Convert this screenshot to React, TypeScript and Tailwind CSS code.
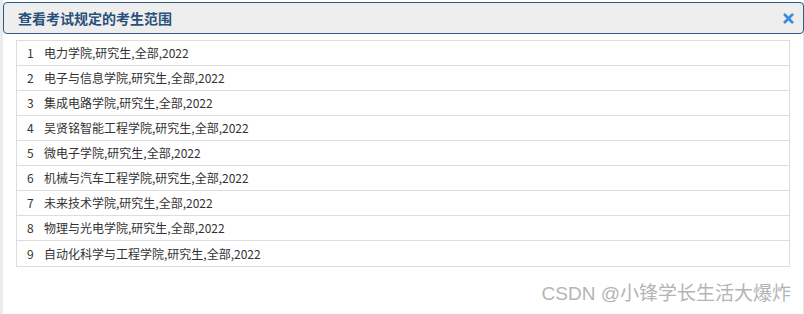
const rows = [
  "电力学院,研究生,全部,2022",
  "电子与信息学院,研究生,全部,2022",
  "集成电路学院,研究生,全部,2022",
  "吴贤铭智能工程学院,研究生,全部,2022",
  "微电子学院,研究生,全部,2022",
  "机械与汽车工程学院,研究生,全部,2022",
  "未来技术学院,研究生,全部,2022",
  "物理与光电学院,研究生,全部,2022",
  "自动化科学与工程学院,研究生,全部,2022",
];

const font = { fontFamily: '"Noto Sans CJK SC", "Open Sans", sans-serif' };

export default function App() {
  return (
    <div className="relative flex h-[314px] w-[804px] bg-white" style={font}>
      {/* left gutter */}
      <div className="w-[3px] bg-[#ebebeb]" />

      <div className="flex flex-1 flex-col border-r border-[#e4e4e4]">
        {/* dialog header */}
        <div className="mt-[2px] -mr-px flex h-[32px] items-center justify-between rounded-[4px] border border-[#2c5b88] bg-[#eeeeee] pl-[14px] pr-[9px]">
          <span className="text-[14px] font-bold leading-none text-[#28507a]">
            查看考试规定的考生范围
          </span>
          <svg width="11" height="11" viewBox="0 0 12 12">
            <path
              d="M2 2 L10 10 M10 2 L2 10"
              stroke="#3b8ae0"
              strokeWidth="3"
              strokeLinecap="round"
            />
          </svg>
        </div>

        {/* list */}
        <div className="ml-[13px] mr-[13px] mt-[6px] border border-[#dddddd]">
          {rows.map((r, i) => (
            <div
              key={i}
              className="flex h-[25px] items-center border-b border-[#dddddd] text-[12px] text-[#333333] last:border-b-0"
            >
              <span className="w-[27px] pl-[10px]">{i + 1}</span>
              <span>{r}</span>
            </div>
          ))}
        </div>
      </div>

      {/* watermark */}
      <div className="absolute right-[13px] top-[284px] font-['Liberation_Sans','Noto_Sans_CJK_SC',sans-serif] text-[19px] leading-none text-[#b4b4b4]">
        CSDN @小锋学长生活大爆炸
      </div>
    </div>
  );
}
